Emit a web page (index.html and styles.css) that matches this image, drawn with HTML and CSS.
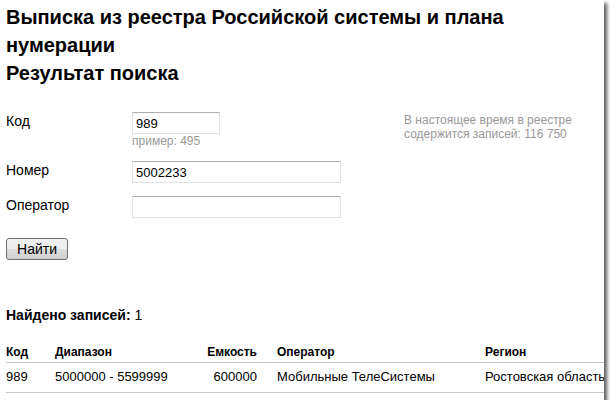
FILE: index.html
```html
<!DOCTYPE html>
<html>
<head>
    <meta charset="utf-8" />
    <title>Выписка из реестра</title>
    <link rel="stylesheet" href="styles.css">
</head>
<body>
    <div class="shot">
        <h1 class="title">Выписка из реестра Российской системы и плана нумерации<br />Результат поиска</h1>

        <div class="search">
            <form class="form">
                <label class="lbl" for="code">Код</label>
                <div class="field">
                    <input type="text" id="code" class="inp short" value="989" />
                    <div class="hint">пример: 495</div>
                </div>

                <label class="lbl" for="num">Номер</label>
                <div class="field">
                    <input type="text" id="num" class="inp" value="5002233" />
                </div>

                <label class="lbl" for="op">Оператор</label>
                <div class="field">
                    <input type="text" id="op" class="inp" value="" />
                </div>
            </form>
            <div class="note">В настоящее время в реестре содержится записей: 116 750</div>
        </div>

        <input type="button" value="Найти" class="btn" />

        <p class="found"><b>Найдено записей:</b> 1</p>

        <table class="result">
            <colgroup>
                <col class="c1" />
                <col class="c2" />
                <col class="c3" />
                <col class="c4" />
                <col class="c5" />
            </colgroup>
            <thead>
                <tr>
                    <th>Код</th>
                    <th>Диапазон</th>
                    <th class="num">Емкость</th>
                    <th>Оператор</th>
                    <th>Регион</th>
                </tr>
            </thead>
            <tbody>
                <tr>
                    <td>989</td>
                    <td>5000000 - 5599999</td>
                    <td class="num">600000</td>
                    <td>Мобильные ТелеСистемы</td>
                    <td>Ростовская область</td>
                </tr>
            </tbody>
        </table>
    </div>
</body>
</html>
```

FILE: styles.css
```css
* {
    padding: 0;
    margin: 0;
    box-sizing: border-box;
}

body {
    background: #fff;
    font-family: "Liberation Sans", Arial, sans-serif;
    color: #000;
}

.shot {
    width: 604px;
    height: 400px;
    padding-left: 6px;
    background: #fff;
    overflow: hidden;
    box-shadow: 3px 3px 4px rgba(0, 0, 0, 0.65);
}

.title {
    font-size: 20px;
    line-height: 28px;
    font-weight: bold;
    margin-top: 3px;
}

.search {
    display: flex;
    margin-top: 25px;
}

.form {
    display: grid;
    grid-template-columns: 126px 209px;
    row-gap: 13px;
    font-size: 14px;
    line-height: 16px;
}

    .form .lbl {
        padding-top: 1px;
    }

.inp {
    display: block;
    width: 209px;
    height: 22px;
    padding: 0 3px;
    font-family: "Liberation Sans", Arial, sans-serif;
    font-size: 13px;
    color: #000;
    border: 1px solid #dfe3e8;
    border-top-color: #abadb3;
    outline: none;
}

    .inp.short {
        width: 88px;
    }

.hint {
    font-size: 12px;
    line-height: 14px;
    color: #999;
}

.note {
    width: 172px;
    margin-left: auto;
    margin-right: 28px;
    margin-top: 1px;
    font-size: 12px;
    line-height: 14px;
    color: #999;
}

.btn {
    display: block;
    width: 62px;
    height: 22px;
    margin-top: 20px;
    font-family: "Liberation Sans", Arial, sans-serif;
    font-size: 14px;
    color: #000;
    border: 1px solid #707070;
    border-radius: 3px;
    background: linear-gradient(#f2f2f2, #ebebeb 50%, #dddddd 51%, #cfcfcf);
}

.found {
    margin-top: 47px;
    font-size: 14px;
    line-height: 16px;
}

.result {
    margin-top: 21px;
    width: 620px;
    table-layout: fixed;
    border-collapse: collapse;
}

    .result .c1 { width: 49px; }
    .result .c2 { width: 145px; }
    .result .c3 { width: 77px; }
    .result .c4 { width: 208px; }
    .result .c5 { width: 141px; }

    .result th {
        font-size: 12px;
        line-height: 16px;
        text-align: left;
        padding: 0 20px 2px 0;
        border-bottom: 1px solid #c6c6cc;
    }

    .result td {
        font-size: 13px;
        line-height: 16px;
        white-space: nowrap;
        padding: 6px 20px 7px 0;
        border-bottom: 1px solid #c6c6cc;
    }

    .result .num {
        text-align: right;
    }
```
